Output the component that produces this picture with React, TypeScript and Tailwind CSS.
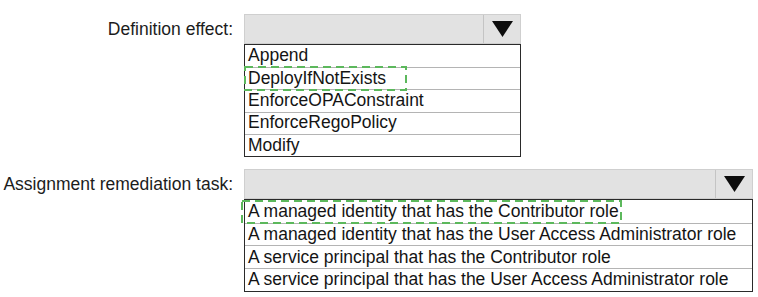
import React from 'react'

type SelectProps = {
  width: string
  options: string[]
  rowClass: string
  markClass: string
  markW: number
  markH: number
}

function Dropdown({ width, options, rowClass, markClass, markW, markH }: SelectProps) {
  return (
    <div className={`relative ${width}`}>
      {/* closed select header */}
      <div className="flex h-[30px] border border-[#cfcfcf] bg-[#e2e2e2]">
        <div className="flex-1" />
        <div className="flex w-[37px] items-center justify-center border-l border-[#c4c4c4]">
          <svg width="21" height="16" viewBox="0 0 21 16">
            <path d="M0 0 H21 L10.5 16 Z" fill="#0d0d0d" />
          </svg>
        </div>
      </div>
      {/* option list */}
      <div className="border border-[#2a2a2a] bg-white">
        {options.map((o, i) => (
          <div
            key={o}
            className={`flex items-center pl-[3px] text-[17.5px] leading-none text-[#141414] ${rowClass} ${i > 0 ? 'border-t border-[#b4b4b4]' : ''}`}
          >
            {o}
          </div>
        ))}
      </div>
      {/* dashed answer marker */}
      <svg className={`pointer-events-none absolute ${markClass}`} width={markW} height={markH}>
        <rect
          x="1"
          y="1"
          width={markW - 2}
          height={markH - 2}
          fill="none"
          stroke="#5cb85c"
          strokeWidth="2"
          strokeDasharray="8 5"
        />
      </svg>
    </div>
  )
}

export default function App() {
  return (
    <div
      className="h-[297px] w-[758px] bg-white pt-[14px] text-[17.5px] text-[#1c1c1c]"
      style={{ fontFamily: '"Liberation Sans", Arial, sans-serif' }}
    >
      <div className="flex">
        <div className="flex h-[30px] w-[244px] items-center justify-end pr-[11px]">Definition effect:</div>
        <Dropdown
          width="w-[277px]"
          options={['Append', 'DeployIfNotExists', 'EnforceOPAConstraint', 'EnforceRegoPolicy', 'Modify']}
          rowClass="h-[22.2px]"
          markClass="left-0 top-[52px]"
          markW={163}
          markH={25}
        />
      </div>
      <div className="mt-[12px] flex">
        <div className="flex h-[30px] w-[244px] items-center justify-end pr-[11px]">Assignment remediation task:</div>
        <Dropdown
          width="w-[509px]"
          options={[
            'A managed identity that has the Contributor role',
            'A managed identity that has the User Access Administrator role',
            'A service principal that has the Contributor role',
            'A service principal that has the User Access Administrator role',
          ]}
          rowClass="h-[22.75px]"
          markClass="left-[-3px] top-[31px]"
          markW={381}
          markH={24}
        />
      </div>
    </div>
  )
}
